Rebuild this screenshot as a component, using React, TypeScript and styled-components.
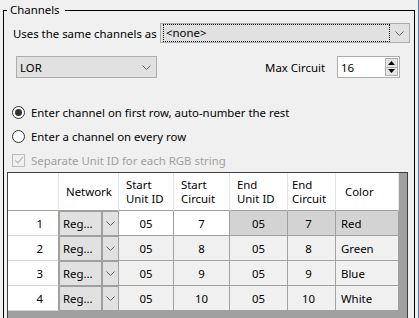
import React from "react";
import styled, { createGlobalStyle } from "styled-components";

const GlobalStyle = createGlobalStyle`
  html, body {
    margin: 0;
    padding: 0;
    background: #f0f0f0;
  }
  body {
    font-family: "Noto Sans", "Segoe UI", sans-serif;
    font-size: 11.4px;
    color: #000;
  }
`;

const Window = styled.div`
  width: 419px;
  height: 318px;
  box-sizing: border-box;
  border-right: 1px solid #3d7fc2;
  overflow: hidden;
  padding-top: 10px;
`;

const Group = styled.div`
  margin: 0 3px;
  height: 340px;
  border: 1px solid #000;
  display: flex;
  flex-direction: column;
`;

const Legend = styled.span`
  align-self: flex-start;
  margin: -9px 0 0 3px;
  padding: 0 5px 0 3px;
  height: 16px;
  line-height: 16px;
  background: #f0f0f0;
`;

const Row = styled.div<{ $top: number; $h: number }>`
  display: flex;
  align-items: center;
  margin-top: ${(p) => p.$top}px;
  height: ${(p) => p.$h}px;
`;

const SameRow = styled(Row)`
  padding: 0 4px 0 9px;
`;

const CircuitRow = styled(Row)`
  padding: 0 14px 0 12px;
`;

const Options = styled.div`
  margin-top: 22px;
  display: flex;
  flex-direction: column;
`;

const Label = styled.span`
  flex: 1;
  white-space: nowrap;
`;

const Combo = styled.div<{ $w: number }>`
  width: ${(p) => p.$w}px;
  height: 100%;
  box-sizing: border-box;
  border: 1px solid #adadad;
  background: #e1e1e1;
  display: flex;
  align-items: center;
`;

const FocusBox = styled.span`
  flex: 1;
  height: 16px;
  margin: 0 0 0 2px;
  border: 1px dotted #000;
  display: flex;
  align-items: center;
  padding-left: 2px;
  line-height: 14px;
`;

const ComboText = styled.span`
  flex: 1;
  padding-left: 3px;
`;

const ArrowBox = styled.span<{ $w: number }>`
  width: ${(p) => p.$w}px;
  display: flex;
  justify-content: center;
  align-items: center;
`;

const MaxLabel = styled.span`
  margin-left: auto;
  margin-right: 12px;
`;

const Spin = styled.div`
  width: 63px;
  height: 22px;
  box-sizing: border-box;
  border: 1px solid #adadad;
  background: #fff;
  display: flex;
  align-items: center;
  padding-left: 3px;
`;

const SpinButtons = styled.div`
  margin-left: auto;
  margin-right: 1px;
  width: 13px;
  height: 18px;
  display: flex;
  flex-direction: column;
`;

const SpinBtn = styled.span`
  flex: 1;
  box-sizing: border-box;
  border: 1px solid #adadad;
  background: #e5e5e5;
  display: flex;
  align-items: center;
  justify-content: center;
  & + & {
    border-top: none;
  }
`;

const Option = styled.div<{ $disabled?: boolean }>`
  height: 24px;
  display: flex;
  align-items: center;
  padding-left: 8px;
  color: ${(p) => (p.$disabled ? "#a0a0a0" : "#000")};
`;

const OptionText = styled.span`
  margin-left: 6px;
`;

const RadioCircle = styled.span<{ $checked?: boolean }>`
  width: 13px;
  height: 13px;
  box-sizing: border-box;
  border: 1px solid #333;
  border-radius: 50%;
  background: #fff;
  display: flex;
  align-items: center;
  justify-content: center;
  &::after {
    content: "";
    width: 7px;
    height: 7px;
    border-radius: 50%;
    background: ${(p) => (p.$checked ? "#333" : "transparent")};
  }
`;

const CheckBox = styled.span`
  width: 13px;
  height: 13px;
  box-sizing: border-box;
  border: 1px solid #bcbcbc;
  background: #f0f0f0;
  display: flex;
  align-items: center;
  justify-content: center;
`;

const Grid = styled.div`
  margin: 0 6px 0 3px;
  height: 200px;
  border: 1px solid #404040;
  background: #a0a0a0;
  display: grid;
  grid-template-columns: 51px 60px 55px 56px 58px 48px 63px;
  grid-auto-rows: 25px;
  grid-template-rows: 38px;
  align-content: start;
`;

const HeadCell = styled.div<{ $pl?: number }>`
  box-sizing: border-box;
  background: #fff;
  border-right: 1px solid #e5e5e5;
  border-bottom: 1px solid #a0a0a0;
  padding-left: ${(p) => p.$pl ?? 7}px;
  display: flex;
  align-items: center;
  line-height: 14px;
`;

const RowHead = styled.div`
  box-sizing: border-box;
  background: #fff;
  border-right: 1px solid #a0a0a0;
  border-bottom: 1px solid #d5d5d5;
  display: flex;
  align-items: center;
  justify-content: flex-end;
  padding-right: 15px;
`;

const Cell = styled.div<{ $bg: string; $left?: boolean; $pr?: number }>`
  box-sizing: border-box;
  background: ${(p) => p.$bg};
  border-right: 1px solid #a0a0a0;
  border-bottom: 1px solid #a0a0a0;
  display: flex;
  align-items: center;
  justify-content: ${(p) => (p.$left ? "flex-start" : "center")};
  padding: 0 ${(p) => p.$pr || 0}px 0 ${(p) => (p.$left ? 5 : 0)}px;
`;

const NetCell = styled.div`
  box-sizing: border-box;
  background: #a0a0a0;
  border-right: 1px solid #a0a0a0;
  border-bottom: 1px solid #a0a0a0;
  padding: 1px 0 0 1px;
  display: flex;
  gap: 2px;
`;

const NetText = styled.span`
  flex: 1;
  background: #e1e1e1;
  display: flex;
  align-items: center;
  padding-left: 3px;
`;

const NetButton = styled.span`
  width: 15px;
  background: #e1e1e1;
  display: flex;
  align-items: center;
  justify-content: center;
`;

const Chevron = () => (
  <svg width="9" height="5" viewBox="0 0 9 5">
    <path d="M0.5 0.5 L4.5 4.5 L8.5 0.5" fill="none" stroke="#606060" strokeWidth="1" />
  </svg>
);

const Tri = ({ up }: { up?: boolean }) => (
  <svg width="7" height="4" viewBox="0 0 7 4">
    <path d={up ? "M0 4 L3.5 0 L7 4 Z" : "M0 0 L3.5 4 L7 0 Z"} fill="#000" />
  </svg>
);

const Check = () => (
  <svg width="10" height="8" viewBox="0 0 10 8">
    <path d="M1 4 L3.8 6.8 L9 1" fill="none" stroke="#bcbcbc" strokeWidth="1.2" />
  </svg>
);

const rows = [
  { n: 1, su: "05", sc: "7", eu: "05", ec: "7", color: "Red" },
  { n: 2, su: "05", sc: "8", eu: "05", ec: "8", color: "Green" },
  { n: 3, su: "05", sc: "9", eu: "05", ec: "9", color: "Blue" },
  { n: 4, su: "05", sc: "10", eu: "05", ec: "10", color: "White" },
];

export default function App() {
  return (
    <Window>
      <GlobalStyle />
      <Group>
        <Legend>Channels</Legend>
        <SameRow $top={5} $h={22}>
          <Label>Uses the same channels as</Label>
          <Combo $w={250}>
            <FocusBox>&lt;none&gt;</FocusBox>
            <ArrowBox $w={19}>
              <Chevron />
            </ArrowBox>
          </Combo>
        </SameRow>
        <CircuitRow $top={13} $h={23}>
          <Combo $w={141}>
            <ComboText>LOR</ComboText>
            <ArrowBox $w={20}>
              <Chevron />
            </ArrowBox>
          </Combo>
          <MaxLabel>Max Circuit</MaxLabel>
          <Spin>
            16
            <SpinButtons>
              <SpinBtn>
                <Tri up />
              </SpinBtn>
              <SpinBtn>
                <Tri />
              </SpinBtn>
            </SpinButtons>
          </Spin>
        </CircuitRow>
        <Options>
          <Option>
            <RadioCircle $checked />
            <OptionText>Enter channel on first row, auto-number the rest</OptionText>
          </Option>
          <Option>
            <RadioCircle />
            <OptionText>Enter a channel on every row</OptionText>
          </Option>
          <Option $disabled>
            <CheckBox>
              <Check />
            </CheckBox>
            <OptionText>Separate Unit ID for each RGB string</OptionText>
          </Option>
        </Options>
        <Grid>
          <HeadCell />
          <HeadCell>Network</HeadCell>
          <HeadCell>
            Start
            <br />
            Unit ID
          </HeadCell>
          <HeadCell>
            Start
            <br />
            Circuit
          </HeadCell>
          <HeadCell>
            End
            <br />
            Unit ID
          </HeadCell>
          <HeadCell $pl={4}>
            End
            <br />
            Circuit
          </HeadCell>
          <HeadCell $pl={9}>Color</HeadCell>
          {rows.map((r) => {
            const first = r.n === 1;
            const startBg = first ? "#fff" : "#f0f0f0";
            const endBg = first ? "#d3d3d3" : "#f0f0f0";
            return (
              <React.Fragment key={r.n}>
                <RowHead>{r.n}</RowHead>
                <NetCell>
                  <NetText>Reg...</NetText>
                  <NetButton>
                    <Chevron />
                  </NetButton>
                </NetCell>
                <Cell $bg={startBg}>{r.su}</Cell>
                <Cell $bg={startBg}>{r.sc}</Cell>
                <Cell $bg={endBg}>{r.eu}</Cell>
                <Cell $bg={endBg} $pr={6}>
                  {r.ec}
                </Cell>
                <Cell $bg={endBg} $left>
                  {r.color}
                </Cell>
              </React.Fragment>
            );
          })}
        </Grid>
      </Group>
    </Window>
  );
}
